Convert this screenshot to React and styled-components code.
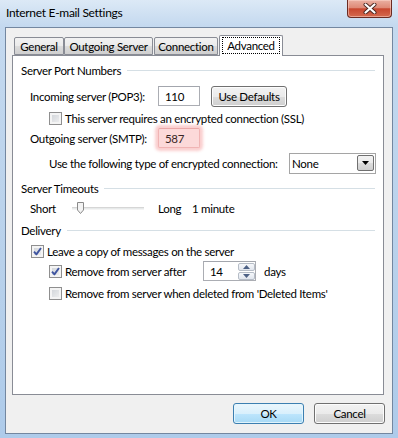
import React from 'react';
import styled, { createGlobalStyle } from 'styled-components';

const GlobalStyle = createGlobalStyle`
  html, body { margin: 0; padding: 0; }
  body {
    font-family: Lato, "Noto Sans", sans-serif;
    font-size: 11.5px;
    letter-spacing: -0.3px;
    color: #000;
  }
`;

const Window = styled.div`
  width: 398px;
  height: 438px;
  box-sizing: border-box;
  display: flex;
  flex-direction: column;
  background: linear-gradient(to bottom, #dce9f6 0px, #c4d9ef 26px, #b8d1eb 60%, #aecbea 100%);
`;

const TitleBar = styled.div`
  height: 27px;
  display: flex;
  justify-content: space-between;
  align-items: flex-start;
  flex-shrink: 0;
`;

const TitleText = styled.div`
  padding-left: 6px;
  line-height: 26px;
  font-size: 12px;
  color: #000;
`;

const CloseButton = styled.div`
  width: 45px;
  height: 18px;
  margin-right: 6px;
  box-sizing: border-box;
  border: 1px solid #6b2b22;
  border-top: none;
  border-radius: 0 0 4px 4px;
  background: linear-gradient(to bottom, #eab0a2 0%, #df8a77 45%, #c8472f 52%, #d46a4f 100%);
  box-shadow: inset 0 0 0 1px rgba(255, 220, 210, 0.5);
  display: flex;
  align-items: center;
  justify-content: center;
`;

const Client = styled.div`
  flex: 1;
  margin: 0 5px 4px 5px;
  border: 1px solid #7387a0;
  background: #f0f0f0;
  padding: 7px 0 0 6px;
  display: flex;
  flex-direction: column;
`;

const TabStrip = styled.div`
  display: flex;
  align-items: flex-end;
  height: 20px;
  padding-left: 2px;
  position: relative;
  z-index: 1;
`;

const Tab = styled.div`
  width: ${p => p.w}px;
  margin-left: ${p => p.ml || 0}px;
  height: ${p => (p.active ? 21 : 18)}px;
  margin-bottom: ${p => (p.active ? -1 : 0)}px;
  box-sizing: border-box;
  border: 1px solid #898c95;
  border-bottom: ${p => (p.active ? 'none' : '1px solid #898c95')};
  border-radius: 2px 2px 0 0;
  background: ${p =>
    p.active
      ? '#fff'
      : 'linear-gradient(to bottom, #f2f2f2 0%, #ebebeb 50%, #dddddd 50%, #cfcfcf 100%)'};
  display: flex;
  align-items: ${p => (p.active ? 'flex-start' : 'center')};
  justify-content: center;
  padding-top: ${p => (p.active ? 1 : 0)}px;
  white-space: nowrap;
`;

const FocusLabel = styled.span`
  border: 1px dotted #000;
  padding: 0 4px;
  line-height: 15px;
`;

const Panel = styled.div`
  width: 372px;
  height: 340px;
  box-sizing: border-box;
  border: 1px solid #898c95;
  background: #fff;
  padding: 0 8px;
`;

const Row = styled.div`
  height: ${p => p.h}px;
  padding-left: ${p => p.indent || 0}px;
  display: flex;
  align-items: center;
  white-space: nowrap;
`;

const GroupLine = styled.div`
  flex: 1;
  margin-left: 6px;
  border-top: 1px solid #d5dfe5;
`;

const Label = styled.span`
  display: inline-block;
  width: ${p => (p.w ? `${p.w}px` : 'auto')};
  margin-left: ${p => p.ml || 0}px;
  flex-shrink: 0;
`;

const TextBox = styled.div`
  width: ${p => p.w}px;
  height: 20px;
  box-sizing: border-box;
  border: 1px solid ${p => (p.alert ? '#f0b4b4' : '#abadb3')};
  border-top-color: ${p => (p.alert ? '#eaa8a8' : '#a3a6ad')};
  background: ${p => (p.alert ? '#fcd9d9' : '#fff')};
  box-shadow: ${p => (p.alert ? '0 0 3px 3px rgba(248, 190, 190, 0.75)' : 'none')};
  border-radius: ${p => (p.alert ? '2px' : '0')};
  color: ${p => (p.alert ? '#3a2626' : '#000')};
  padding-left: 6px;
  display: flex;
  align-items: center;
  position: relative;
  flex-shrink: 0;
`;

const Button = styled.div`
  width: ${p => p.w}px;
  height: 21px;
  margin-left: ${p => p.ml || 0}px;
  box-sizing: border-box;
  border: 1px solid ${p => (p.primary ? '#3c7fb1' : '#707070')};
  border-radius: 3px;
  background: ${p =>
    p.primary
      ? 'linear-gradient(to bottom, #eaf6fd 0%, #d9f0fc 50%, #bee6fd 50%, #a7d9f5 100%)'
      : 'linear-gradient(to bottom, #f2f2f2 0%, #ebebeb 50%, #dddddd 50%, #cfcfcf 100%)'};
  box-shadow: inset 0 0 0 1px ${p => (p.primary ? 'rgba(230,246,253,0.9)' : '#fcfcfc')};
  display: flex;
  align-items: center;
  justify-content: center;
`;

const ButtonRow = styled.div`
  display: flex;
  justify-content: flex-end;
  gap: 10px;
  margin-top: 8px;
  padding-right: 7px;
`;

const Box = styled.span`
  width: 13px;
  height: 13px;
  box-sizing: border-box;
  flex-shrink: 0;
  border: 1px solid #8f8f8f;
  background: linear-gradient(135deg, #cdd1d6 0%, #f3f3f3 100%);
  box-shadow: inset 0 0 0 2px #f4f4f4;
  margin-right: 3px;
  display: flex;
  align-items: center;
  justify-content: center;
`;

const Select = styled.div`
  width: 87px;
  height: 21px;
  box-sizing: border-box;
  border: 1px solid #a5a5a5;
  background: #fff;
  display: flex;
  align-items: center;
  justify-content: space-between;
  padding: 0 1px 0 2px;
  flex-shrink: 0;
`;

const DropButton = styled.div`
  width: 17px;
  height: 16px;
  box-sizing: border-box;
  border: 1px solid #707070;
  border-radius: 2px;
  background: linear-gradient(to bottom, #f2f2f2 0%, #ebebeb 50%, #dddddd 50%, #cfcfcf 100%);
  display: flex;
  align-items: center;
  justify-content: center;
`;

const SpinButtons = styled.div`
  position: absolute;
  right: 0;
  top: 1px;
  width: 17px;
  height: 17px;
  display: flex;
  flex-direction: column;
  gap: 1px;
`;

const SpinButton = styled.div`
  flex: 1;
  border: 1px solid #b6bdc7;
  border-radius: 2px;
  background: linear-gradient(to bottom, #f6f8fb, #e1e6ee);
  display: flex;
  align-items: center;
  justify-content: center;
`;

const Track = styled.div`
  width: 72px;
  height: 3px;
  margin-right: 14px;
  box-sizing: border-box;
  border-top: 1px solid #d6d6d6;
  border-bottom: 1px solid #f4f4f4;
  background: #e7eaea;
  position: relative;
  flex-shrink: 0;
`;

const Thumb = styled.svg`
  position: absolute;
  left: 5px;
  top: -6px;
`;

function Check({ checked }) {
  return (
    <Box>
      {checked && (
        <svg width="9" height="9" viewBox="0 0 9 9">
          <path d="M1 4.6 L3.4 7.4 L8 1" fill="none" stroke="#3f55a0" strokeWidth="1.9" strokeLinejoin="round" />
        </svg>
      )}
    </Box>
  );
}

function GroupHeader({ children, h }) {
  return (
    <Row h={h}>
      <Label>{children}</Label>
      <GroupLine />
    </Row>
  );
}

export default function App() {
  return (
    <>
      <GlobalStyle />
      <Window>
        <TitleBar>
          <TitleText>Internet E-mail Settings</TitleText>
          <CloseButton>
            <svg width="14" height="11" viewBox="0 0 14 11">
              <path d="M2.5 1.5 L11.5 9.5 M11.5 1.5 L2.5 9.5" stroke="#4a2620" strokeWidth="4" strokeLinecap="round" />
              <path d="M2.5 1.5 L11.5 9.5 M11.5 1.5 L2.5 9.5" stroke="#fff" strokeWidth="2.2" strokeLinecap="round" />
            </svg>
          </CloseButton>
        </TitleBar>
        <Client>
          <TabStrip>
            <Tab w={50}>General</Tab>
            <Tab w={89}>Outgoing Server</Tab>
            <Tab w={64} ml={1}>Connection</Tab>
            <Tab w={64} ml={1} active>
              <FocusLabel>Advanced</FocusLabel>
            </Tab>
          </TabStrip>
          <Panel>
            <GroupHeader h={28}>Server Port Numbers</GroupHeader>
            <Row h={24} indent={9}>
              <Label w={128}>Incoming server (POP3):</Label>
              <TextBox w={42}>110</TextBox>
              <Button w={76} ml={11}>Use Defaults</Button>
            </Row>
            <Row h={20} indent={28}>
              <Check />
              <Label>This server requires an encrypted connection (SSL)</Label>
            </Row>
            <Row h={20} indent={9}>
              <Label w={128}>Outgoing server (SMTP):</Label>
              <TextBox w={42} alert>587</TextBox>
            </Row>
            <Row h={30} indent={28}>
              <Label w={240}>Use the following type of encrypted connection:</Label>
              <Select>
                <span>None</span>
                <DropButton>
                  <svg width="7" height="4" viewBox="0 0 7 4">
                    <path d="M0 0 L7 0 L3.5 4 Z" fill="#000" />
                  </svg>
                </DropButton>
              </Select>
            </Row>
            <GroupHeader h={20}>Server Timeouts</GroupHeader>
            <Row h={20} indent={9}>
              <Label w={42}>Short</Label>
              <Track>
                <Thumb width="7" height="12" viewBox="0 0 7 12">
                  <path d="M0.5 0.5 H6.5 V8 L3.5 11.5 L0.5 8 Z" fill="#f3f3f3" stroke="#8a8a8a" />
                </Thumb>
              </Track>
              <Label w={34}>Long</Label>
              <Label>1 minute</Label>
            </Row>
            <GroupHeader h={24}>Delivery</GroupHeader>
            <Row h={18} indent={10}>
              <Check checked />
              <Label>Leave a copy of messages on the server</Label>
            </Row>
            <Row h={22} indent={28}>
              <Check checked />
              <Label w={138}>Remove from server after</Label>
              <TextBox w={53}>
                14
                <SpinButtons>
                  <SpinButton>
                    <svg width="7" height="4" viewBox="0 0 7 4">
                      <path d="M0 4 L7 4 L3.5 0 Z" fill="#4d6185" />
                    </svg>
                  </SpinButton>
                  <SpinButton>
                    <svg width="7" height="4" viewBox="0 0 7 4">
                      <path d="M0 0 L7 0 L3.5 4 Z" fill="#4d6185" />
                    </svg>
                  </SpinButton>
                </SpinButtons>
              </TextBox>
              <Label ml={8}>days</Label>
            </Row>
            <Row h={22} indent={28}>
              <Check />
              <Label>Remove from server when deleted from 'Deleted Items'</Label>
            </Row>
          </Panel>
          <ButtonRow>
            <Button w={71} primary>OK</Button>
            <Button w={71}>Cancel</Button>
          </ButtonRow>
        </Client>
      </Window>
    </>
  );
}
